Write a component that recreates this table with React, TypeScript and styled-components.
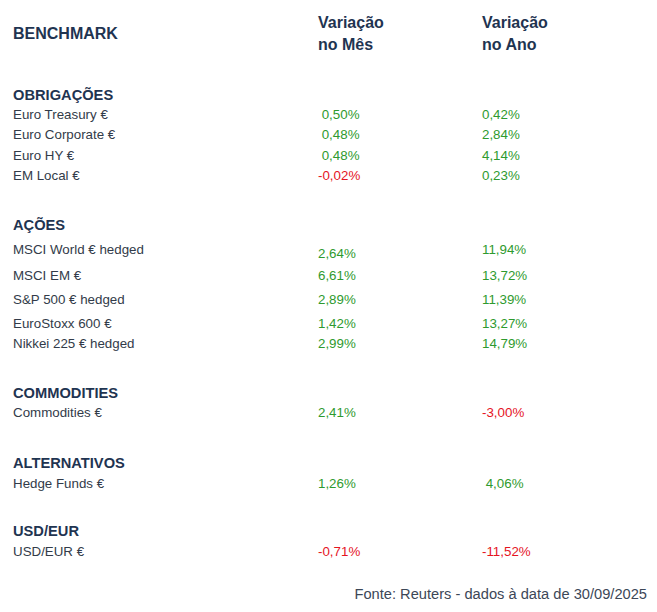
import React from "react";
import styled, { createGlobalStyle } from "styled-components";

const GlobalStyle = createGlobalStyle`
  html, body { margin: 0; padding: 0; background: #ffffff; }
  body { font-family: "Liberation Sans", Arial, sans-serif; }
`;

const Sheet = styled.div`
  width: 657px;
  box-sizing: border-box;
  padding: 1px 10px 0 13px;
  background: #ffffff;
`;

const Grid = styled.div<{ $h: number }>`
  display: grid;
  grid-template-columns: 305px 164px 1fr;
  height: ${(p) => p.$h}px;
  align-items: end;
`;

const HeaderTitle = styled.div`
  font-size: 16px;
  font-weight: 700;
  line-height: 44px;
  color: #1f3451;
`;

const HeaderCol = styled.div`
  font-size: 16px;
  font-weight: 700;
  line-height: 22px;
  color: #1f3451;
`;

const SectionTitle = styled.div`
  font-size: 14.67px;
  font-weight: 700;
  line-height: 20px;
  color: #1f3451;
`;

type Tone = "text" | "up" | "down";
type VAlign = "end" | "center" | "start";

const toneColor: Record<Tone, string> = {
  text: "#323b49",
  up: "#2e9a2e",
  down: "#e5141f",
};

const Cell = styled.div<{ $tone: Tone; $v?: VAlign }>`
  font-size: 13.33px;
  line-height: 20px;
  white-space: pre;
  color: ${(p) => toneColor[p.$tone]};
  align-self: ${(p) => p.$v ?? "end"};
`;

const Footer = styled.div`
  height: 42px;
  display: flex;
  justify-content: flex-end;
  align-items: flex-end;
  font-size: 14.67px;
  line-height: 20px;
  color: #3c4757;
`;

type Item = {
  name: string;
  month: string;
  year: string;
  h: number;
  vName?: VAlign;
  vMonth?: VAlign;
  vYear?: VAlign;
};

type Section = { title: string; h: number; items: Item[] };

const sections: Section[] = [
  {
    title: "OBRIGAÇÕES",
    h: 49,
    items: [
      { name: "Euro Treasury €", month: " 0,50%", year: "0,42%", h: 20 },
      { name: "Euro Corporate €", month: " 0,48%", year: "2,84%", h: 20 },
      { name: "Euro HY €", month: " 0,48%", year: "4,14%", h: 21 },
      { name: "EM Local €", month: "-0,02%", year: "0,23%", h: 20 },
    ],
  },
  {
    title: "AÇÕES",
    h: 49,
    items: [
      {
        name: "MSCI World € hedged",
        month: "2,64%",
        year: "11,94%",
        h: 29,
        vName: "center",
        vYear: "center",
      },
      { name: "MSCI EM €", month: "6,61%", year: "13,72%", h: 22 },
      { name: "S&P 500 € hedged", month: "2,89%", year: "11,39%", h: 24 },
      { name: "EuroStoxx 600 €", month: "1,42%", year: "13,27%", h: 24 },
      { name: "Nikkei 225 € hedged", month: "2,99%", year: "14,79%", h: 20 },
    ],
  },
  {
    title: "COMMODITIES",
    h: 49,
    items: [{ name: "Commodities €", month: "2,41%", year: "-3,00%", h: 20 }],
  },
  {
    title: "ALTERNATIVOS",
    h: 50,
    items: [{ name: "Hedge Funds €", month: "1,26%", year: " 4,06%", h: 21 }],
  },
  {
    title: "USD/EUR",
    h: 47,
    items: [{ name: "USD/EUR €", month: "-0,71%", year: "-11,52%", h: 21 }],
  },
];

const tone = (v: string): Tone => (v.trim().startsWith("-") ? "down" : "up");

export default function App() {
  return (
    <>
      <GlobalStyle />
      <Sheet>
        <Grid $h={55}>
          <HeaderTitle>BENCHMARK</HeaderTitle>
          <HeaderCol>
            Variação
            <br />
            no Mês
          </HeaderCol>
          <HeaderCol>
            Variação
            <br />
            no Ano
          </HeaderCol>
        </Grid>
        {sections.map((s) => (
          <React.Fragment key={s.title}>
            <Grid $h={s.h}>
              <SectionTitle>{s.title}</SectionTitle>
            </Grid>
            {s.items.map((it) => (
              <Grid $h={it.h} key={it.name}>
                <Cell $tone="text" $v={it.vName}>
                  {it.name}
                </Cell>
                <Cell $tone={tone(it.month)} $v={it.vMonth}>
                  {it.month}
                </Cell>
                <Cell $tone={tone(it.year)} $v={it.vYear}>
                  {it.year}
                </Cell>
              </Grid>
            ))}
          </React.Fragment>
        ))}
        <Footer>Fonte: Reuters - dados à data de 30/09/2025</Footer>
      </Sheet>
    </>
  );
}
